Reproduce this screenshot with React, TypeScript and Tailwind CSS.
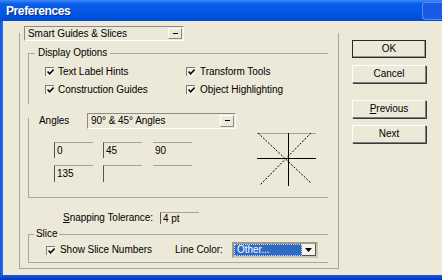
const font = "font-['Liberation_Sans',Arial,sans-serif] text-[10px] tracking-[-0.05px] leading-none text-black";

function Check() {
  return (
    <span className="w-[9px] h-[9px] border-t border-l border-[#7b7b7b] bg-[#f3f1e8] flex items-center justify-center shrink-0">
      <svg width="7" height="6" viewBox="0 0 7 6">
        <path d="M0.6 2.6 L2.6 4.8 L6.6 0.6" stroke="#000" strokeWidth="1.5" fill="none" />
      </svg>
    </span>
  );
}

function Arrow({ dark = false }: { dark?: boolean }) {
  return (
    <svg width="7" height="4" viewBox="0 0 7 4">
      {dark ? <path d="M0 0 H7 L3.5 4 Z" fill="#000" /> : <path d="M1 1.5 H6" stroke="#000" strokeWidth="1" />}
    </svg>
  );
}

function Select({ label, width }: { label: string; width: string }) {
  return (
    <div className={`${width} h-[15px] flex items-stretch border-t border-l border-[#8a8a8a] border-b border-r border-b-white border-r-white`}>
      <span className="flex-1 flex items-center pl-[3px]">{label}</span>
      <span className="w-[14px] flex items-center justify-center border-l border-t border-white border-r border-b border-r-[#8a8a8a] border-b-[#8a8a8a] my-[1px] mr-[1px]">
        <Arrow />
      </span>
    </div>
  );
}

function AngleBox({ value, left = true, className = "" }: { value?: string; left?: boolean; className?: string }) {
  return (
    <div className={`w-[39px] flex items-center pl-[2px] border-t border-[#a6a396] ${left ? "border-l border-l-[#555]" : ""} ${className}`}>
      {value}
    </div>
  );
}

function Button({ children, primary = false }: { children: React.ReactNode; primary?: boolean }) {
  return (
    <div
      className={`w-[74px] h-[18px] flex items-center justify-center ${
        primary
          ? "border border-[#2a2a2a] shadow-[inset_-1px_-1px_0_#9a9a9a]"
          : "border-t border-l border-white border-r border-b border-r-[#7d7d7d] border-b-[#7d7d7d] shadow-[1px_1px_0_#3a3a3a]"
      }`}
    >
      {children}
    </div>
  );
}

function AngleDiagram() {
  return (
    <svg width="59" height="53" viewBox="0 0 59 53" className="shrink-0">
      <line x1="0" y1="0.5" x2="59" y2="0.5" stroke="#a6a396" />
      <line x1="31.5" y1="0" x2="31.5" y2="53" stroke="#000" />
      <line x1="0" y1="25.5" x2="59" y2="25.5" stroke="#000" />
      <line x1="1" y1="0" x2="54" y2="50" stroke="#000" strokeDasharray="2 1.5" />
      <line x1="54" y1="0" x2="3" y2="52" stroke="#000" strokeDasharray="2 1.5" />
    </svg>
  );
}

export default function App() {
  return (
    <div className={`w-[442px] h-[280px] flex flex-col bg-[#ece9d8] overflow-hidden ${font}`}>
      {/* Title bar */}
      <div className="h-[21px] shrink-0 flex items-center bg-[linear-gradient(180deg,#3d8af7_0%,#0b5fe9_18%,#0056e4_60%,#004bd3_100%)]">
        <span className="pl-[6px] text-white font-bold text-[12px] tracking-[-0.4px] [text-shadow:1px_1px_0_#0a2a8a]">
          Preferences
        </span>
        <span className="ml-auto w-[20px] h-[18px] rounded-l-[4px] border border-r-0 border-[#4f8ef5] bg-[#1a5be6]" />
      </div>

      <div className="flex-1 flex">
        {/* left window border */}
        <div className="w-[3px] bg-[linear-gradient(90deg,#0a52dc,#2a72f0)]" />

        <div className="flex-1 flex items-start">
          {/* Main panel */}
          <div className="ml-[16px] mt-[12px] w-[320px] h-[236px] shrink-0 flex flex-col border-l border-r border-b border-[#aca899]">
            <div className="-mt-[7px] ml-[4px]">
              <Select label="Smart Guides & Slices" width="w-[160px]" />
            </div>

            {/* Display Options */}
            <div className="relative mt-[12px] ml-[8px] w-[300px] h-[51px] border-t border-l border-[#aca899]">
              <span className="absolute -top-[6px] left-[6px] px-[3px] bg-[#ece9d8]">Display Options</span>
              <div className="pt-[13px] pl-[16px] grid grid-cols-[141px_1fr] gap-y-[9px]">
                <div className="h-[9px] flex items-center gap-[4px]">
                  <Check />
                  <span>Text Label Hints</span>
                </div>
                <div className="h-[9px] flex items-center gap-[5px]">
                  <Check />
                  <span>Transform Tools</span>
                </div>
                <div className="h-[9px] flex items-center gap-[4px]">
                  <Check />
                  <span>Construction Guides</span>
                </div>
                <div className="h-[9px] flex items-center gap-[5px]">
                  <Check />
                  <span>Object Highlighting</span>
                </div>
              </div>
            </div>

            {/* Angles */}
            <div className="mt-[14px] ml-[8px] w-[300px] h-[80px] border-l border-b border-[#aca899] flex flex-col">
              <div className="-mt-[5px] h-[16px] flex items-center pl-[10px]">
                <span className="w-[48px]">Angles</span>
                <Select label="90° & 45° Angles" width="w-[149px] h-[16px]" />
              </div>
              <div className="mt-[4px] flex items-start">
                <div className="mt-[9px] ml-[25px] w-[139px] flex flex-col gap-[7px]">
                  <div className="h-[16px] flex">
                    <AngleBox value="0" />
                    <AngleBox value="45" className="ml-[10px]" />
                    <AngleBox value="90" left={false} className="ml-[11px]" />
                  </div>
                  <div className="h-[17px] flex">
                    <AngleBox value="135" />
                    <AngleBox className="ml-[10px]" />
                    <AngleBox left={false} className="ml-[11px]" />
                  </div>
                </div>
                <div className="ml-[64px]">
                  <AngleDiagram />
                </div>
              </div>
            </div>

            {/* Snapping tolerance */}
            <div className="mt-[14px] ml-[43px] h-[12px] flex items-center">
              <span className="w-[97px]">
                <span className="underline">S</span>napping Tolerance:
              </span>
              <div className="w-[39px] h-[12px] flex items-center pl-[2px] border-t border-l border-t-[#a6a396] border-l-[#555]">
                4 pt
              </div>
            </div>

            {/* Slice */}
            <div className="relative mt-[10px] ml-[8px] w-[300px] h-[29px] border-t border-l border-b border-[#aca899]">
              <span className="absolute -top-[6px] left-[5px] px-[2px] bg-[#ece9d8]">Slice</span>
              <div className="mt-[7px] h-[16px] flex items-center pl-[17px]">
                <div className="w-[129px] flex items-center gap-[5px]">
                  <Check />
                  <span>Show Slice Numbers</span>
                </div>
                <span className="w-[57px]">Line Color:</span>
                <div className="w-[86px] h-[16px] flex items-stretch border-2 border-[#9d9a8c] border-r-[#c9c6b8] border-b-[#c9c6b8]">
                  <span className="w-[68px] flex items-center pl-[2px] bg-[#316ac5] text-white border border-dotted border-[#c8d8f4]">
                    Other...
                  </span>
                  <span className="flex-1 flex items-center justify-center bg-[#f4f2ea] border-r border-b border-[#555]">
                    <Arrow dark />
                  </span>
                </div>
              </div>
            </div>
          </div>

          {/* Buttons */}
          <div className="ml-[13px] mt-[19px] flex flex-col">
            <Button primary>OK</Button>
            <div className="mt-[7px]">
              <Button>Cancel</Button>
            </div>
            <div className="mt-[17px]">
              <Button>
                <span className="underline">P</span>revious
              </Button>
            </div>
            <div className="mt-[7px]">
              <Button>Next</Button>
            </div>
          </div>
        </div>
      </div>

      {/* bottom window border */}
      <div className="h-[5px] shrink-0 bg-[linear-gradient(180deg,#1d5ae0,#0033bd)]" />
    </div>
  );
}
